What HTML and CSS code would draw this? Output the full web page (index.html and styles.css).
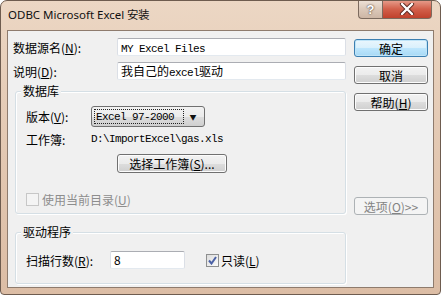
FILE: index.html
```html
<!DOCTYPE html>
<html lang="zh-CN">
<head>
  <meta charset="UTF-8" />
  <title>ODBC Microsoft Excel 安装</title>
  <link rel="stylesheet" href="styles.css">
</head>
<body>
  <div class="window">
    <div class="titlebar">
      <span class="title">ODBC Microsoft Excel 安装</span>
      <div class="caption-btns">
        <span class="cap-btn cap-help">?</span>
        <span class="cap-btn cap-close">
          <svg width="16" height="12" viewBox="0 0 16 12">
            <path d="M3 1 L13 11 M13 1 L3 11" stroke="#5a2a22" stroke-width="4.2" stroke-linecap="round"/>
            <path d="M3 1 L13 11 M13 1 L3 11" stroke="#fff" stroke-width="2.4" stroke-linecap="round"/>
          </svg>
        </span>
      </div>
    </div>

    <div class="client">
      <div class="form">
        <div class="row">
          <span class="lbl">数据源名(<u>N</u>):</span>
          <span class="field wide"><span class="mono">MY Excel Files</span></span>
        </div>
        <div class="row row-2">
          <span class="lbl">说明(<u>D</u>):</span>
          <span class="field wide">我自己的<span class="mono">excel</span>驱动</span>
        </div>

        <div class="group group-db">
          <span class="group-title">数据库</span>
          <div class="grow">
            <span class="lbl-s">版本(<u>V</u>):</span>
            <span class="combo">
              <span class="combo-text mono">Excel 97-2000</span>
              <span class="combo-arrow">▼</span>
            </span>
          </div>
          <div class="grow grow-path">
            <span class="lbl-s">工作簿:</span>
            <span class="mono">D:\ImportExcel\gas.xls</span>
          </div>
          <div class="grow grow-btn">
            <span class="btn btn-pick">选择工作簿(<u>S</u>)...</span>
          </div>
          <div class="grow grow-check">
            <span class="check disabled"></span>
            <span class="muted">使用当前目录(<u>U</u>)</span>
          </div>
        </div>

        <div class="group group-drv">
          <span class="group-title">驱动程序</span>
          <div class="grow">
            <span class="lbl-r">扫描行数(<u>R</u>):</span>
            <span class="field small">8</span>
            <span class="check checked">
              <svg width="9" height="9" viewBox="0 0 9 9">
                <path d="M1 4.5 L3.5 7.5 L8 1" fill="none" stroke="#4b61a6" stroke-width="2"/>
              </svg>
            </span>
            <span class="check-text">只读(<u>L</u>)</span>
          </div>
        </div>
      </div>

      <div class="side">
        <span class="btn btn-default">确定</span>
        <span class="btn">取消</span>
        <span class="btn">帮助(<u>H</u>)</span>
        <span class="btn btn-off">选项(<u>O</u>)&gt;&gt;</span>
      </div>
    </div>
  </div>
</body>
</html>
```

FILE: styles.css
```css
* {
  box-sizing: border-box;
}

body {
  margin: 0;
  background: #fff;
  font-family: "Noto Sans CJK SC", "Noto Sans", sans-serif;
  font-size: 12px;
  color: #000;
}

u {
  text-decoration: underline;
}

.mono {
  font-family: "Liberation Mono", "Noto Sans CJK SC", monospace;
  font-size: 11px;
  letter-spacing: -0.6px;
}

.window {
  width: 441px;
  height: 295px;
  border: 1px solid #6e5c4f;
  border-radius: 7px 7px 4px 4px;
  background: linear-gradient(180deg, #ecd7c4 0%, #e6cdb8 30%, #dcbda5 100%);
  overflow: hidden;
}

.titlebar {
  height: 30px;
  display: flex;
  align-items: flex-start;
  padding: 0 8px 0 7px;
}

.title {
  font-family: "Noto Sans", sans-serif;
  font-size: 11.5px;
  line-height: 28px;
  color: #111;
}

.caption-btns {
  margin-left: auto;
  margin-top: -1px;
  display: flex;
}

.cap-btn {
  height: 19px;
  display: flex;
  align-items: center;
  justify-content: center;
  border: 1px solid #7c6a5e;
  border-top: none;
}

.cap-help {
  width: 24px;
  border-right: none;
  border-radius: 0 0 0 4px;
  background: linear-gradient(180deg, #efe3d9 0%, #dcc9ba 50%, #cdb6a5 100%);
  color: #fff;
  font-family: "Liberation Sans", sans-serif;
  font-weight: bold;
  font-size: 13px;
  text-shadow: 0 0 2px #5d4a3e, 0 0 1px #5d4a3e;
}

.cap-close {
  width: 50px;
  border-radius: 0 0 4px 0;
  background: linear-gradient(180deg, #e8a08f 0%, #d2604b 50%, #c0412c 100%);
}

.client {
  height: 256px;
  margin: 0 7px;
  background: #f0f0f0;
  box-shadow: 0 0 0 1px #8e7b6d;
  display: flex;
  padding-top: 7px;
}

.form {
  width: 338px;
  padding-left: 5px;
}

.row {
  display: flex;
  align-items: center;
  height: 18px;
}

.row-2 {
  margin-top: 6px;
}

.lbl {
  width: 104px;
}

.field {
  display: block;
  height: 18px;
  line-height: 16px;
  background: #fff;
  border: 1px solid #dbdfe6;
  border-top-color: #abadb3;
  border-bottom-color: #e3e9ef;
  border-radius: 2px;
  padding-left: 3px;
  white-space: nowrap;
}

.wide {
  width: 229px;
}

.small {
  width: 75px;
}

.group {
  position: relative;
  margin-left: 2px;
  width: 331px;
  border: 1px solid #d5dfe5;
  border-radius: 3px;
  box-shadow: inset 1px 1px 0 #fff, 1px 1px 0 #fff;
  padding-left: 10px;
}

.group-title {
  position: absolute;
  top: -8px;
  left: 5px;
  padding: 0 2px;
  line-height: 14px;
  background: #f0f0f0;
}

.group-db {
  margin-top: 11px;
  padding-top: 14px;
  padding-bottom: 7px;
}

.group-drv {
  margin-top: 18px;
  padding-top: 18px;
  padding-bottom: 14px;
}

.grow {
  display: flex;
  align-items: center;
}

.lbl-s {
  width: 65px;
}

.lbl-r {
  width: 84px;
}

.combo {
  width: 114px;
  height: 21px;
  border: 1px solid #707070;
  border-radius: 3px;
  background: linear-gradient(180deg, #f2f2f2 0%, #ebebeb 50%, #dddddd 51%, #cfcfcf 100%);
  display: flex;
  align-items: center;
  padding: 2px;
}

.combo-text {
  flex: 1;
  height: 15px;
  border: 1px dotted #222;
  display: flex;
  align-items: center;
  padding-left: 1px;
}

.combo-arrow {
  width: 18px;
  text-align: center;
  font-size: 7px;
  color: #111;
}

.grow-path {
  margin-top: 5px;
  height: 14px;
}

.grow-btn {
  margin-top: 8px;
  padding-left: 91px;
}

.btn {
  height: 19px;
  display: flex;
  align-items: center;
  justify-content: center;
  border: 1px solid #707070;
  border-radius: 3px;
  background: linear-gradient(180deg, #f2f2f2 0%, #ebebeb 50%, #dddddd 51%, #cfcfcf 100%);
  box-shadow: inset 0 0 0 1px #fcfcfc;
}

.btn-pick {
  width: 110px;
}

.grow-check {
  margin-top: 20px;
  height: 13px;
}

.check {
  width: 13px;
  height: 13px;
  border: 1px solid #8e8f8f;
  background: linear-gradient(135deg, #dcdcdc 0%, #fbfbfb 100%);
  display: flex;
  align-items: center;
  justify-content: center;
}

.check.disabled {
  border-color: #c7c7c7;
  background: #f4f4f4;
  margin-right: 3px;
}

.muted {
  color: #8d8d8d;
}

.check.checked {
  margin-left: 21px;
  margin-right: 2px;
}

.side {
  width: 74px;
  margin-left: 8px;
  padding-top: 1px;
  display: flex;
  flex-direction: column;
}

.side .btn {
  height: 18px;
  margin-bottom: 9px;
}

.btn-default {
  border-color: #3c7fb1;
  background: linear-gradient(180deg, #eaf6fd 0%, #d9f0fc 50%, #bee6fd 51%, #a7d9f5 100%);
  box-shadow: inset 0 0 0 1px #bfe4f8;
}

.side .btn-off {
  margin-top: 77px;
  border-color: #adb2b5;
  background: #f4f4f4;
  box-shadow: none;
  color: #838383;
}
```
